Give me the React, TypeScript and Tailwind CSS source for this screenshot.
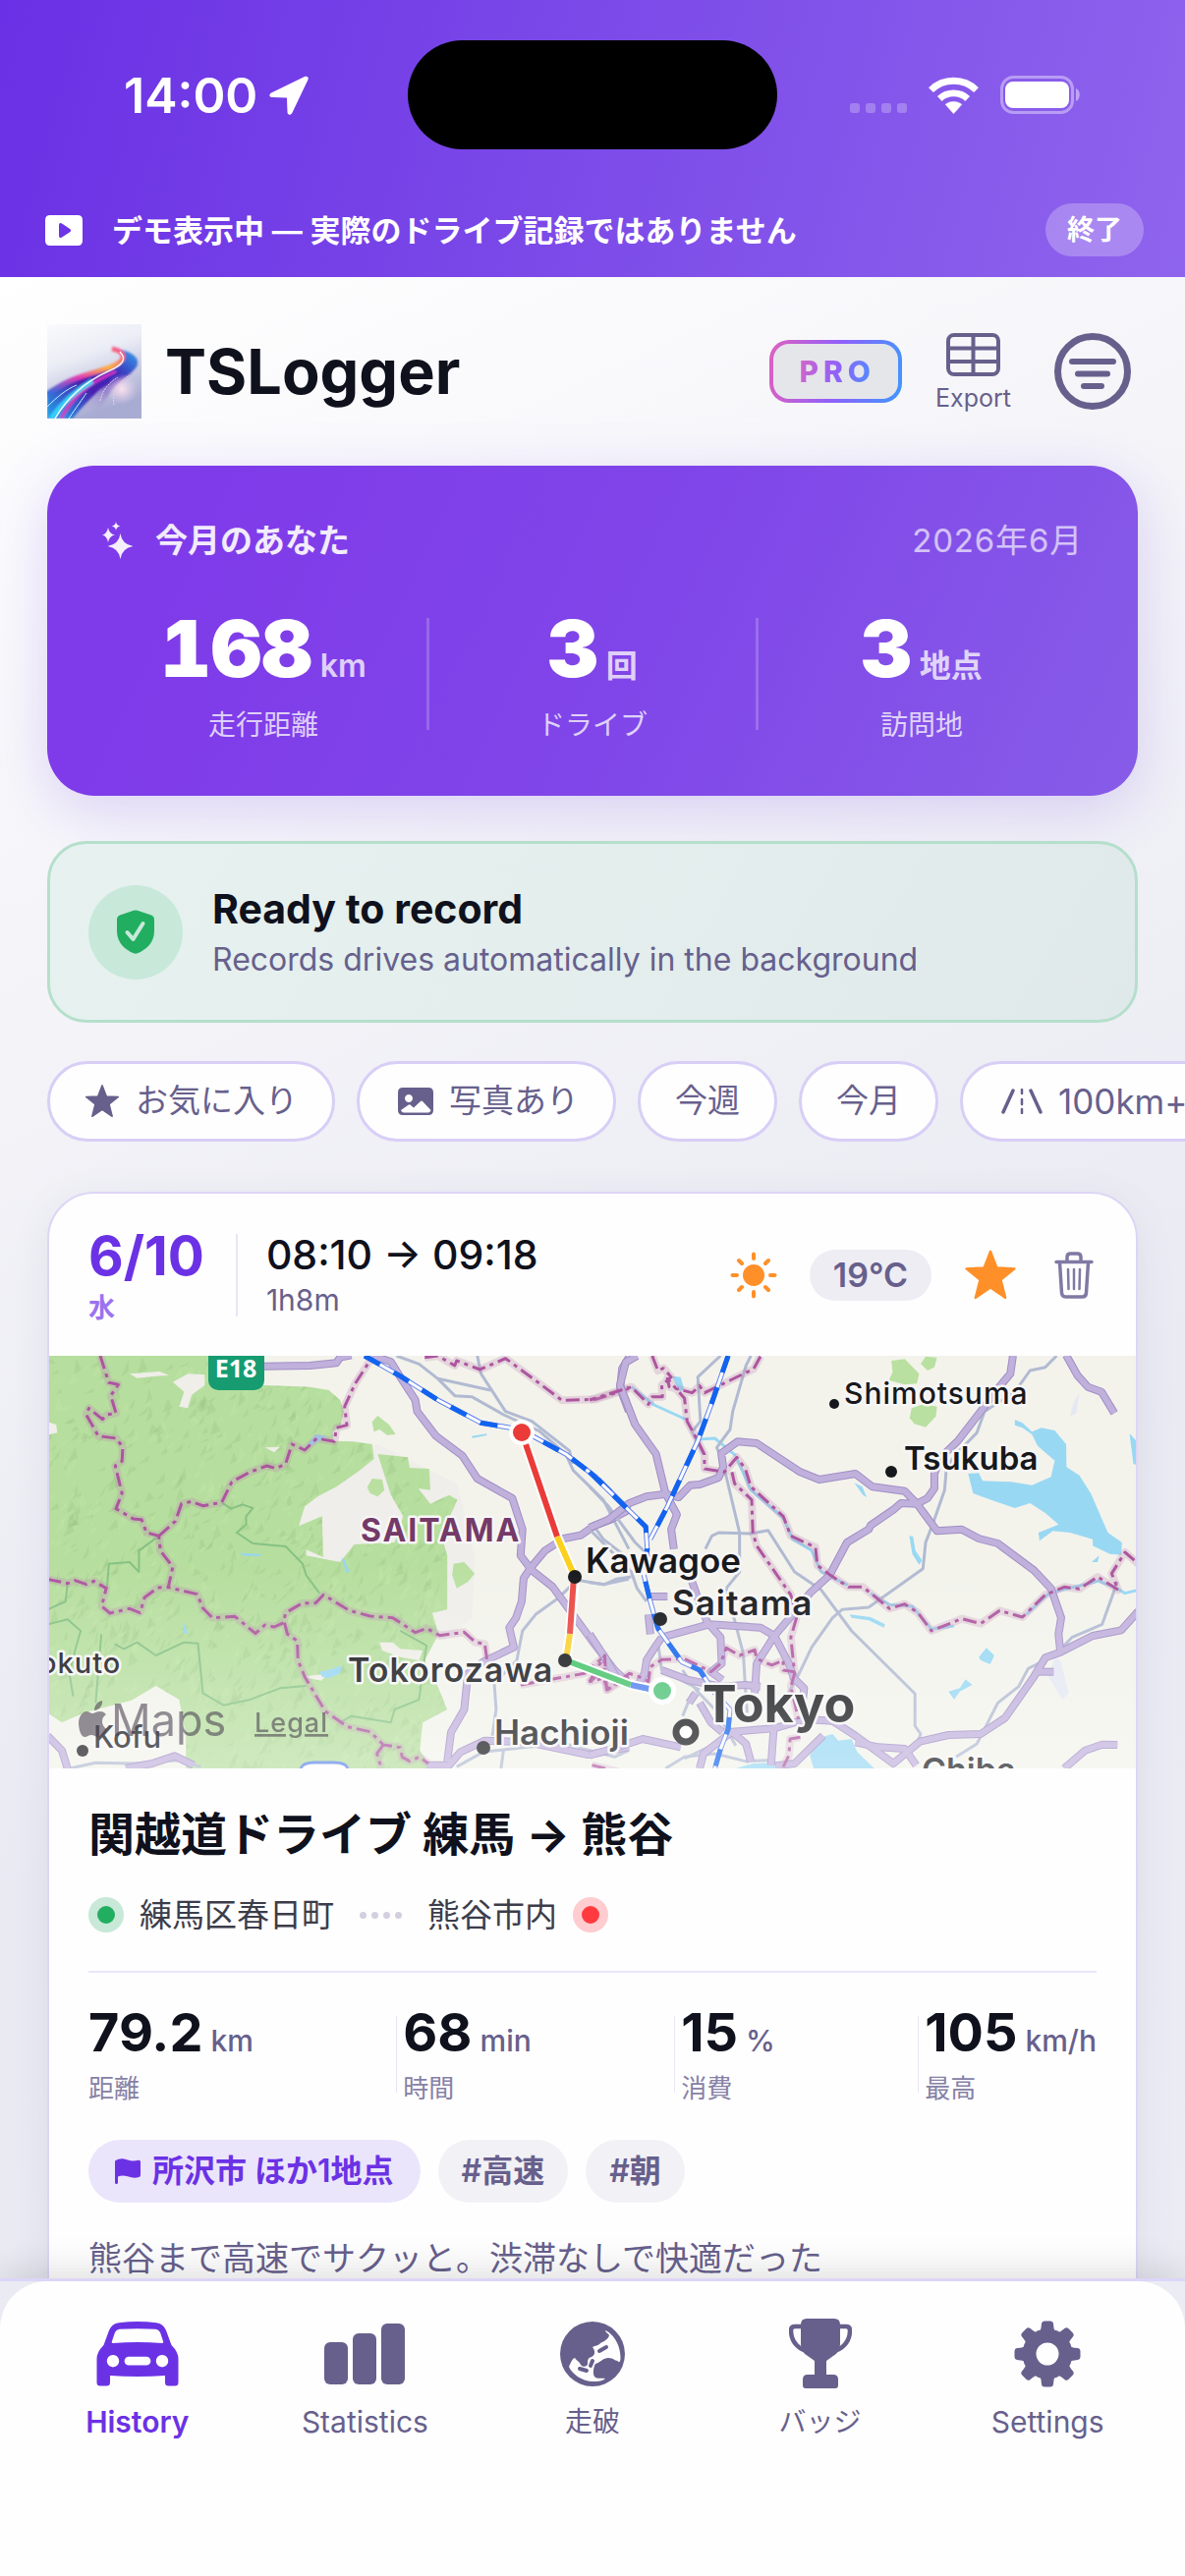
import React from "react";

const purpleRoadsWest = [
  "M598,62 L720,60 L790,52 L800,35 L830,28",
  "M885,30 L935,48 L960,95 L1000,165 L1005,200 L1055,275 L1125,335 L1165,405 L1258,465 L1285,560 L1280,640 L1310,685 L1365,735 L1400,790 L1470,900 L1530,990 L1568,1030",
  "M1568,500 L1520,530 L1475,550 L1440,578 L1395,588 L1345,625 L1305,680 L1288,710 L1283,780 L1268,830 L1250,860 L1262,920 L1180,965 L1140,1000 L1130,1110 L1095,1180 L1085,1270",
  "M1568,35 L1550,70 L1545,130 L1568,200",
  "M1030,1280 L1090,1280 L1120,1240 L1185,1205 L1300,1210 L1460,1248 L1568,1225",
  "M22,1190 L60,1235 L75,1290",
  "M230,1290 L300,1275 L360,1252 L410,1280",
];

const purpleRoadsEast = [
  "M125,30 L95,50 L80,120 L120,240 L175,330 L200,450 L230,515 L215,560 L222,620",
  "M0,555 L50,530 L105,480 L150,460 L200,452 L235,462 L265,425 L290,423 L340,402 L352,370 L347,328 L390,292 L440,297 L555,385 L605,408 L700,390 L745,430 L830,443 L862,482 L880,510 L915,565 L980,560 L1025,588 L1075,603 L1170,685 L1215,740 L1242,830 L1235,880 L1240,935",
  "M1115,30 L1108,85 L1075,130 L1030,200 L970,290 L925,340 L908,390 L908,435 L890,465 L862,482 L820,480 L800,500 L740,548 L735,560 L678,600 L632,700 L580,755 L520,840 L487,885 L440,970 L435,1060",
  "M1255,28 L1285,90 L1312,125 L1348,140 L1382,205",
  "M190,890 L315,850 L450,860 L487,885 L525,970 L538,1015 L565,1045 L560,1100",
  "M315,850 L345,890 L348,970 L320,995 L350,1020",
  "M190,990 L260,1020 L345,1040 L410,1035 L450,1040",
  "M190,890 L175,915 L150,960 L145,1000 L130,1030",
  "M1445,810 L1400,868 L1325,885 L1240,935 L1200,952 L1170,1010 L1095,1135 L1030,1185 L945,1188 L870,1208 L800,1275 L700,1190 L640,1145 L570,1140 L485,1168 L375,1178 L300,1245 L290,1290",
  "M1390,1218 L1350,1217 L1305,1235 L1250,1290",
  "M375,1178 L412,1215 L425,1270",
  "M485,1168 L478,1280",
  "M615,1190 L540,1275 L490,1282",
  "M700,1210 L760,1225 L830,1230 L860,1280",
  "M0,1250 L60,1230 L140,1200 L240,1225",
  "M290,1090 L320,1150 L350,1180",
  "M0,880 L40,950 L70,1010",
  "M150,765 L205,765",
  "M155,820 L160,880",
  "M270,720 L285,770 L312,850",
  "M280,1060 L262,1090",
  "M1180,995 L1222,995",
];

const grayRoadsWest = [
  "M950,30 L1010,55 L1060,100 L1105,152 L1150,155 L1235,210 L1330,260 L1400,330 L1420,380 L1500,470 L1568,620",
  "M1060,100 L1200,135",
  "M1165,30 L1175,85 L1240,200 L1310,230 L1410,320 L1418,360",
  "M1568,712 L1500,728 L1430,715 L1380,770 L1320,820 L1285,870 L1270,960 L1210,1030 L1215,1110 L1205,1190",
  "M1475,550 L1500,590 L1568,650",
  "M80,1290 L150,1273 L250,1275 L370,1265 L430,1285",
  "M1110,1285 L1180,1240 L1300,1225 L1400,1215 L1530,1255 L1568,1235",
  "M1235,1230 L1228,1290",
];

const grayRoadsEast = [
  "M345,30 L285,95 L292,230 L270,262 L300,330",
  "M425,30 L412,60 L377,200 L370,255 L335,310 L350,350 L395,570 L395,690 L360,740",
  "M1230,30 L1200,65 L1160,75 L1120,140 L1040,200 L1020,265 L965,330 L940,370 L935,440 L905,540 L885,600 L878,680 L735,798 L665,805 L640,830 L585,920 L550,1005 L490,1130",
  "M305,620 L322,580 L340,570 L425,573 L470,563 L540,690 L610,745 L690,870 L857,1062 L857,1160 L872,1185 L860,1220",
  "M0,430 L50,490 L120,600 L165,650",
  "M0,560 L60,630 L110,690 L125,740 L150,780",
  "M360,740 L405,940 L410,1040 L415,1120",
  "M1390,720 L1350,850 L1270,890 L1225,945 L1155,985 L1130,1040 L1075,1090 L1020,1215 L965,1255",
  "M245,990 L280,1050 L330,1110 L385,1220",
  "M250,1260 L330,1215 L375,1170",
  "M180,905 L190,990 L290,1050",
  "M270,1060 L245,1130",
  "M200,1290 L250,1255 L330,1245 L410,1268 L470,1265",
  "M0,722 L40,728 L70,712 L110,705",
];

const bordersWest = [
  "M162,30 L185,112 L210,118 L190,152 L204,205 L180,210 L168,224 L132,190 L125,210 L157,275 L205,282 L222,310 L220,352 L202,366 L220,450 L204,497 L250,528 L272,530 L285,570 L318,580 L322,625 L355,675 L343,737 L420,758 L435,800 L460,830 L520,826 L575,878 L600,852 L625,858 L650,845 L655,815 L700,785 L735,785 L756,760 L825,808 L880,825 L940,830 L1000,875 L1030,862 L1065,884 L1130,874 L1160,905 L1185,910 L1192,970",
  "M318,580 L362,535 L378,482 L405,475 L435,488 L485,478 L512,415 L560,385 L605,366 L630,374 L655,360 L672,300 L706,318 L738,282 L785,292 L790,250 L818,242 L812,185 L840,115 L885,35",
  "M22,712 L75,725 L95,716 L125,728 L145,718 L178,740 L166,795 L188,816 L240,802 L268,815 L280,768 L315,738 L343,737",
  "M652,845 L660,880 L686,900 L688,960 L706,1010 L760,1115 L820,1163 L880,1178 L915,1218 L960,1226 L965,1255 L985,1268 L1010,1255 L1035,1275",
  "M915,1218 L898,1245 L910,1290",
  "M1025,35 L1060,30 L1105,60 L1110,45 L1172,72 L1240,38 L1290,80 L1390,166 L1480,163 L1568,130",
  "M1280,1035 L1450,1000 L1500,950 L1505,985 L1465,1025 L1500,1015 L1512,1050 L1568,1010",
  "M1470,1280 L1540,1300",
];

const bordersEast = [
  "M165,30 L180,75 L195,68 L215,95 L190,120 L192,155 L165,155 L155,178 L110,125 L0,165",
  "M450,32 L432,70 L370,105 L303,143 L290,122 L270,143 L210,125 L205,100 L250,160 L257,230 L285,290 L302,330 L303,375 L355,385 L388,340 L410,375 L425,430 L510,520 L530,580 L595,615 L600,670 L632,698 L682,736 L720,736 L790,802 L830,788 L865,815 L900,870 L980,833 L1030,848 L1080,808 L1140,828 L1200,760 L1250,736 L1290,742 L1338,705 L1392,745 L1375,695 L1410,630 L1445,665",
  "M375,385 L382,420 L427,470 L430,570 L440,610 L530,760 L545,830 L530,890 L540,1000 L530,1040 L550,1140",
  "M0,1025 L40,945 L45,1050 L105,1000 L130,1010 L155,1025 L160,980 L190,958 L250,955 L320,995 L345,970 L360,922 L395,945 L435,928 L440,955 L480,975 L510,960 L510,990 L540,995",
  "M555,1195 L528,1200 L525,1250 L510,1285",
];

const railWest = "M865,30 L960,92 L1060,165 L1175,235 L1280,255 L1400,330 L1480,400 L1568,500";
const railsEast = [
  "M0,385 L148,552 L152,620 L143,700 L160,780 L180,862 L243,965 L290,990 L330,1060 L370,1110 L365,1170 L345,1230 L330,1290",
  "M365,30 L320,180 L285,290 L205,490 L160,590",
];

const forest =
  "M22,30 H450 L455,122 L600,120 L720,125 L770,135 L800,165 L810,200 L800,245 L780,262 L782,290 L835,292 L885,300 L890,345 L850,382 L790,430 L740,460 L706,490 L690,550 L752,520 L755,645 L710,622 L710,640 L800,660 L838,606 L945,600 L968,520 L935,455 L900,330 L980,340 L985,372 L1037,375 L1040,440 L1008,435 L1040,482 L1090,455 L1112,470 L1092,520 L1075,600 L1085,640 L1085,805 L1045,815 L1062,880 L1025,960 L1060,1040 L1085,1110 L1020,1150 L1012,1235 L1045,1290 L390,1290 L390,1190 L372,1080 L310,1038 L245,1082 L120,1120 L60,1150 L22,1120 Z";

const westPatches = [
  "M885,232 L900,213 L930,240 L948,270 L925,272 L905,255 L890,262 Z",
  "M872,432 L885,405 L912,408 L918,440 L900,460 L880,450 Z",
  "M1102,665 L1130,660 L1158,695 L1140,720 L1110,740 L1098,700 Z",
];
const eastPatches = [
  "M795,45 L830,40 L868,85 L862,115 L830,118 L788,105 L798,80 Z",
  "M885,32 L915,35 L908,65 L890,75 L872,55 Z",
  "M848,190 L880,178 L915,185 L912,215 L885,248 L855,238 L843,220 Z",
];
const clearings = [
  "M355,110 L395,85 L440,88 L440,120 L405,150 L395,190 L372,185 L385,140 Z",
  "M240,85 L320,78 L345,90 L310,92 L260,98 Z",
  "M22,232 L45,240 L48,265 L22,272 Z",
  "M600,310 L640,308 L625,325 Z",
  "M905,905 L940,905 L960,925 L1020,930 L1010,960 L960,950 L912,930 Z",
  "M700,1010 L770,1000 L750,1022 Z",
];
const waterWest = [
  "M745,995 L775,988 L805,975 L800,1000 L770,1015 L752,1010 Z",
  "M535,632 L590,636 L588,642 L540,640 Z",
  "M803,645 L812,655 L826,693 L816,690 Z",
  "M380,842 L388,855 L396,880 L386,878 Z",
  "M706,312 L735,270 L765,275 L730,300 Z",
  "M1150,275 L1190,268 L1190,273 L1152,281 Z",
];
const waterEast = [
  "M1120,225 L1140,235 L1165,262 L1190,250 L1225,258 L1255,300 L1256,370 L1290,395 L1320,450 L1350,530 L1365,570 L1402,600 L1400,638 L1370,635 L1325,610 L1325,590 L1265,570 L1220,565 L1185,595 L1182,570 L1235,545 L1200,510 L1160,480 L1120,495 L1045,465 L1010,450 L997,390 L1025,388 L1035,412 L1110,415 L1165,425 L1215,400 L1225,350 L1180,305 L1165,270 L1140,250 L1120,242 Z",
  "M1422,268 L1440,290 L1443,365 L1432,360 Z",
  "M1025,950 L1045,922 L1066,945 L1055,972 L1030,960 Z",
  "M945,1055 L975,1045 L990,1018 L1008,1035 L975,1055 L960,1080 Z",
  "M685,820 L740,828 L778,850 L775,860 L735,838 L690,830 Z",
  "M842,580 L852,582 L858,625 L876,655 L868,668 L850,635 Z",
  "M580,1250 L610,1195 L640,1185 L655,1205 L690,1200 L705,1240 L750,1290 L590,1290 Z",
  "M218,92 L240,95 L250,135 L235,138 Z",
  "M697,418 L718,430 L730,462 L720,455 Z",
  "M385,1290 L430,1275 L500,1272 L510,1290 Z",
  "M1322,660 L1342,640 L1338,660 Z",
];
const streams = [
  "M388,345 L425,440 L510,525 L535,590 L585,625 L610,690 L680,730",
  "M740,755 L790,790 L850,795 L900,865 L960,855",
  "M110,125 L170,180 L255,225",
  "M285,285 L330,282 L385,335",
  "M1150,820 L1210,755 L1340,718 L1380,735 L1410,755 L1445,745",
];
const parkEdges = [
  "M485,478 L510,497 L540,484 L568,495 L550,520 L550,545 L525,570 L568,603 L655,612 L700,665 L710,700 L745,755",
  "M318,580 L265,625 L265,690 L240,660 L185,665 L180,740",
  "M22,850 L75,835 L110,870 L95,930 L80,1000 L90,1070",
  "M200,910 L225,925 L260,905 L310,945 L385,905 L422,908 L435,1060 L490,1097 L560,1080 L640,1045 L710,1038",
  "M960,870 L1030,915 L1025,950 L1010,1080 L945,1110 L935,1150 L830,1130 L800,1150",
  "M22,805 L70,780 L75,725",
  "M165,880 L150,1090",
];

// Small facets that give the forest its shaded relief.
const facets = Array.from({ length: 1500 }, (_, i) => {
  const rand = (n: number) => {
    const v = Math.sin(i * 12.9898 + n * 78.233) * 43758.5453;
    return v - Math.floor(v);
  };
  const x = Math.round(rand(1) * 1130);
  const y = Math.round(30 + rand(2) * 1260);
  const a = Math.round(rand(3) * 24 - 30);
  const b = Math.round(16 + rand(4) * 36);
  const c = Math.round(8 + rand(5) * 20);
  return { d: `M${x},${y} l${a},${b} l${c},${-Math.round(b / 3)} Z`, dark: rand(6) > 0.45 };
});

type Label = { t: string; x: number; y: number; s: number; w?: number; c?: string; ls?: number; dot?: [number, number, number] };
const labels: Label[] = [
  { t: "Shimotsuma", x: 809, y: 49, s: 30, w: 500, ls: 1, dot: [799, 49, 5] },
  { t: "Tsukuba", x: 870, y: 116, s: 33, dot: [857, 118, 6] },
  { t: "SAITAMA", x: 317, y: 189, s: 32, w: 700, c: "#743a68", ls: 2 },
  { t: "Kawagoe", x: 546, y: 221, s: 35, dot: [535, 225, 7] },
  { t: "Saitama", x: 634, y: 264, s: 35, ls: 1, dot: [622, 268, 7] },
  { t: "Tokorozawa", x: 304, y: 332, s: 34, ls: 1, dot: [525, 310, 7] },
  { t: "Hachioji", x: 453, y: 396, s: 35, dot: [442, 399, 7] },
  { t: "Kofu", x: 45, y: 399, s: 31, w: 500, dot: [34, 402, 6] },
  { t: "okuto", x: -10, y: 323, s: 29, w: 500, ls: 1 },
  { t: "Chiba", x: 888, y: 434, s: 34 },
  { t: "Tokyo", x: 665, y: 373, s: 52, w: 700 },
];

function Lines({ d, stroke, w, dash, o }: { d: string[]; stroke: string; w: number; dash?: string; o?: number }) {
  return (
    <g fill="none" stroke={stroke} strokeWidth={w} strokeDasharray={dash} opacity={o} strokeLinejoin="round">
      {d.map((p) => (
        <path key={p} d={p} vectorEffect="non-scaling-stroke" />
      ))}
    </g>
  );
}

function Roads({ purple, gray, borders, rails }: { purple: string[]; gray: string[]; borders: string[]; rails: string[] }) {
  return (
    <>
      <Lines d={gray} stroke="#b1bad1" w={3} />
      <Lines d={borders} stroke="#c08ab5" w={8} o={0.28} />
      <Lines d={purple} stroke="#a18ec4" w={8} />
      <Lines d={purple} stroke="#c0b0dc" w={6} />
      <Lines d={borders} stroke="#ad559f" w={3} dash="14 5 4 5" />
      <Lines d={rails} stroke="#5f80ef" w={5} />
      <Lines d={rails} stroke="#ffffff" w={3} />
      <Lines d={rails} stroke="#1263ef" w={5} dash="18 16" />
    </>
  );
}

function RouteMap() {
  return (
    <svg viewBox="0 0 1106 420" preserveAspectRatio="xMidYMid slice" className="block h-[420px] w-full" role="img" aria-label="Route map from Nerima to Kumagaya">
      <defs>
        <clipPath id="forest-clip">
          <path d={forest} />
        </clipPath>
        <linearGradient id="map-fade" x1="0" y1="0" x2="0" y2="1">
          <stop offset="0.5" stopColor="#fff" stopOpacity="0" />
          <stop offset="1" stopColor="#fff" stopOpacity="0.34" />
        </linearGradient>
      </defs>
      <rect width="1106" height="420" fill="#f3f3ec" />
      <g transform="translate(-10 -10) scale(0.38265 0.33333)">
        <path d="M680,380 L900,300 L1110,420 L1160,650 L1150,830 L1080,900 L700,700 Z" fill="#efeeea" />
        <path d={forest} fill="#b6de9e" />
        <g clipPath="url(#forest-clip)">
          {facets.map((f, i) => (
            <path key={i} d={f.d} fill={f.dark ? "#98c386" : "#c2e8a9"} opacity="0.3" />
          ))}
        </g>
        {clearings.map((d) => (
          <path key={d} d={d} fill="#efeee8" />
        ))}
        {westPatches.map((d) => (
          <path key={d} d={d} fill="#b9e0a1" />
        ))}
        {waterWest.map((d) => (
          <path key={d} d={d} fill="#97d6f2" />
        ))}
        <Lines d={parkEdges} stroke="#86c184" w={2} />
        <Roads purple={purpleRoadsWest} gray={grayRoadsWest} borders={bordersWest} rails={[railWest]} />
      </g>
      <g transform="translate(550 -10) scale(0.38647 0.33333)">
        {eastPatches.map((d) => (
          <path key={d} d={d} fill="#b9e0a1" />
        ))}
        {waterEast.map((d) => (
          <path key={d} d={d} fill="#99d8f3" />
        ))}
        <Lines d={streams} stroke="#99d8f3" w={3} />
        <path d="M1290,145 L1282,205 L1265,215 L1275,170 Z M1225,950 L1240,960 L1262,1060 L1245,1080 L1208,1010 Z" fill="#e4e8f3" />
        <Roads purple={purpleRoadsEast} gray={grayRoadsEast} borders={bordersEast} rails={railsEast} />
      </g>
      <rect x="162" y="-20" width="57" height="55" rx="10" fill="#169c70" />
      <text x="190" y="22" textAnchor="middle" fill="#fff" fontSize="25" fontWeight="700" fontFamily="Open Sans, Inter, sans-serif">
        E18
      </text>
      <path d="M256,420 Q258,414 270,414 H290 Q302,414 304,420" fill="#fff" stroke="#5d86e8" strokeWidth="3" />
      <g fill="none">
        <path d="M481,78 L517,184 L535,225 L530,283 L526,310 L592,335 L620,341" stroke="#fff" strokeWidth="10" />
        <path d="M481,78 L517,184" stroke="#ea3b38" strokeWidth="6" />
        <path d="M517,184 L535,225" stroke="#fbd01e" strokeWidth="6" />
        <path d="M534,225 L530,283" stroke="#ea4843" strokeWidth="6" />
        <path d="M530,283 L526,310" stroke="#fbd02e" strokeWidth="6" />
        <path d="M526,310 L592,335" stroke="#42c266" strokeWidth="6" />
        <path d="M592,335 L620,341" stroke="#4f7ff0" strokeWidth="6" />
      </g>
      <g fontFamily="Inter, sans-serif">
        {labels.map((l) => (
          <g key={l.t}>
            {l.dot && <circle cx={l.dot[0]} cy={l.dot[1]} r={l.dot[2]} fill="#17181b" />}
            <text x={l.x} y={l.y} fontSize={l.s} fontWeight={l.w ?? 600} letterSpacing={l.ls ?? 0} fill={l.c ?? "#17181b"} stroke="#f7f6f6" strokeWidth="5" strokeLinejoin="round" paintOrder="stroke">
              {l.t}
            </text>
          </g>
        ))}
        <circle cx="648" cy="383" r="10" fill="#fff" stroke="#17181b" strokeWidth="7" />
      </g>
      <circle cx="481" cy="78" r="13" fill="#fff" />
      <circle cx="481" cy="78" r="9" fill="#ea3b38" />
      <circle cx="624" cy="341" r="14" fill="#fff" />
      <circle cx="624" cy="341" r="9" fill="#4fc277" />
      <rect width="1106" height="420" fill="url(#map-fade)" />
      <g fill="#4a4150" opacity="0.58" fontFamily="Inter, sans-serif">
        <path d="M54,351 c1,5 -4,10 -8,10 c0,-5 3,-9 8,-10 Z M58,365 c-6,4 -5,12 1,15 c-2,5 -5,8 -9,8 c-3,0 -4,-2 -7,-2 c-3,0 -4,2 -7,2 c-4,0 -6,-9 -6,-14 c0,-7 4,-12 8,-12 c3,0 4,2 6,2 c2,0 4,-2 8,-2 c3,0 4,1 6,3 Z" />
        <text x="63" y="387" fontSize="45" fontWeight="400">
          Maps
        </text>
        <text x="209" y="383" fontSize="27" fontWeight="500" letterSpacing="1" textDecoration="underline">
          Legal
        </text>
      </g>
    </svg>
  );
}

const starPath = "M12 1.2 L14.9 8.6 L22.9 9 L16.7 14 L18.8 22.2 L12 17.6 L5.2 22.2 L7.3 14 L1.1 9 L9.1 8.6 Z";

function Star({ className }: { className: string }) {
  return (
    <svg viewBox="0 0 24 24" className={className} fill="currentColor" stroke="currentColor" strokeWidth="1" strokeLinejoin="round" aria-hidden="true">
      <path d={starPath} />
    </svg>
  );
}

function Logo() {
  return (
    <svg viewBox="0 0 96 96" className="size-24" role="img" aria-label="TSLogger logo">
      <defs>
        <linearGradient id="lg-sky" x1="0" y1="0" x2="0.35" y2="1">
          <stop offset="0" stopColor="#fafafc" />
          <stop offset="0.4" stopColor="#eceef6" />
          <stop offset="1" stopColor="#a9acd2" />
        </linearGradient>
        <linearGradient id="lg-blue" x1="1" y1="0" x2="0" y2="1">
          <stop offset="0" stopColor="#38a8f0" />
          <stop offset="0.3" stopColor="#3a2bb8" />
          <stop offset="0.55" stopColor="#4a1fb0" />
          <stop offset="1" stopColor="#1ea6ee" />
        </linearGradient>
        <linearGradient id="lg-hot" x1="1" y1="0" x2="0" y2="1">
          <stop offset="0" stopColor="#f54f9a" />
          <stop offset="0.3" stopColor="#ffb13c" />
          <stop offset="0.6" stopColor="#e43cb4" />
          <stop offset="1" stopColor="#2a6fe0" />
        </linearGradient>
        <linearGradient id="lg-fade" x1="1" y1="0" x2="0.6" y2="1">
          <stop offset="0.5" stopColor="#4a1fb0" />
          <stop offset="1" stopColor="#b9b2dc" stopOpacity="0" />
        </linearGradient>
        <radialGradient id="lg-glow">
          <stop offset="0" stopColor="#ffe4ee" stopOpacity="0.95" />
          <stop offset="1" stopColor="#e9cfee" stopOpacity="0" />
        </radialGradient>
        <filter id="lg-soft">
          <feGaussianBlur stdDeviation="1" />
        </filter>
      </defs>
      <rect width="96" height="96" fill="url(#lg-sky)" />
      <g filter="url(#lg-soft)">
        <path d="M70,25 C84,27 96,34 91,43 C84,54 72,58 64,70 C58,78 54,86 50,96 L0,96 L0,72 C20,56 50,50 66,43 C80,37 80,30 70,25 Z" fill="url(#lg-fade)" opacity="0.7" />
        <path d="M70,25 C84,27 96,34 91,43 C84,54 62,58 50,70 C42,78 34,86 26,96 L0,96 L0,68 C20,54 50,49 66,43 C80,37 80,30 70,25 Z" fill="url(#lg-blue)" />
        <path d="M0,72 C24,52 50,50 66,43 C82,36 80,28 66,25" fill="none" stroke="url(#lg-hot)" strokeWidth="5" />
        <path d="M14,96 C30,66 52,56 70,48" fill="none" stroke="#d736c4" strokeWidth="3" />
        <path d="M4,96 C18,76 32,66 46,58" fill="none" stroke="#36d0f6" strokeWidth="5" />
      </g>
      <circle cx="76" cy="66" r="16" fill="url(#lg-glow)" />
      <path d="M8,96 C22,72 40,58 62,48 C76,42 82,36 74,28" fill="none" stroke="#fff" strokeWidth="1.4" opacity="0.9" />
      <path d="M0,84 C10,74 20,66 30,62 M22,96 C30,84 36,76 40,70" fill="none" stroke="#bff3ff" strokeWidth="1" />
      <path d="M68,82 C66,70 70,60 84,52 M54,78 C56,68 62,60 72,54" fill="none" stroke="#f8c6e6" strokeWidth="1" strokeDasharray="2 1" />
    </svg>
  );
}

function StatusBar() {
  return (
    <div className="grid h-[111px] grid-cols-[1fr_376px_1fr] items-center">
      <div className="flex items-center gap-3 pl-[126px]">
        <span className="text-[50px] leading-none font-semibold">14:00</span>
        <svg viewBox="0 0 40 40" className="size-10" fill="currentColor" aria-hidden="true">
          <path d="M36 1 L2 17.500 C-0.500 19 0 22 3 22 L17 22.500 C18 22.500 18 22.800 18 24 L18.500 37 C18.500 40.500 22 40.500 23.300 38 L39.500 4 C40.500 1.500 38.500 0 36 1 Z" />
        </svg>
      </div>
      <div className="h-full rounded-full bg-black" />
      <div className="flex items-center justify-end gap-[22px] pr-[106px]">
        <div className="flex gap-[6px] pt-[26px] opacity-25">
          <i className="size-[10px] rounded-[3px] bg-white" />
          <i className="size-[10px] rounded-[3px] bg-white" />
          <i className="size-[10px] rounded-[3px] bg-white" />
          <i className="size-[10px] rounded-[3px] bg-white" />
        </div>
        <svg viewBox="0 0 52 38" className="h-[38px] w-[51px]" aria-hidden="true">
          <path d="M26 38 L17.500 28.500 C22 24.500 30 24.500 34.500 28.500 Z" fill="#fff" stroke="#fff" strokeWidth="0.500" />
          <g fill="none" stroke="#fff" strokeWidth="7">
            <path d="M11.500 22.500 C19.500 15 32.500 15 40.500 22.500" />
            <path d="M2.500 13.500 C15.500 0.800 36.500 0.800 49.500 13.500" />
          </g>
        </svg>
        <svg viewBox="0 0 82 39" className="h-[39px] w-[82px]" aria-hidden="true">
          <rect x="1.500" y="1.500" width="72" height="36" rx="12" fill="none" stroke="#fff" strokeWidth="3" opacity="0.4" />
          <rect x="5" y="6" width="65" height="27" rx="8" fill="#fff" />
          <path d="M77 13 C82 15 82 24 77 26 Z" fill="#fff" opacity="0.45" />
        </svg>
      </div>
    </div>
  );
}

function Summary({ value, unit, label }: { value: string; unit: string; label: string }) {
  return (
    <div className="flex flex-1 flex-col items-center gap-6">
      <p className="flex items-baseline gap-2 leading-none">
        <span className="text-[80px] leading-none font-black tabular-nums">{value}</span>
        <span className="text-[32px] leading-none font-semibold text-white/75">{unit}</span>
      </p>
      <p className="text-[28px] leading-none text-white/75">{label}</p>
    </div>
  );
}

function Metric({ value, unit, label, divided }: { value: string; unit: string; label: string; divided?: boolean }) {
  return (
    <div className="flex items-center gap-[6px]">
      {divided && <i className="h-[78px] w-px bg-[#e9e5f6]" />}
      <div>
        <p className="flex items-baseline gap-2 leading-none">
          <span className="text-[54px] leading-none font-bold text-[#0f111c]">{value}</span>
          <span className="text-[30px] leading-none font-medium text-[#67608c]">{unit}</span>
        </p>
        <p className="mt-[17px] text-[26px] leading-none text-[#8681a5]">{label}</p>
      </div>
    </div>
  );
}

function Chip({ children }: { children: React.ReactNode }) {
  return (
    <button type="button" className="flex h-[82px] shrink-0 items-center gap-4 rounded-full border-[3px] border-[#d8cef6] bg-[#fefeff] px-[35px] text-[33px] whitespace-nowrap text-[#67608c]">
      {children}
    </button>
  );
}

function Tab({ label, active, cjk, children }: { label: string; active?: boolean; cjk?: boolean; children: React.ReactNode }) {
  return (
    <a href="#" aria-current={active ? "page" : undefined} className={active ? "flex flex-1 flex-col items-center gap-4 font-semibold text-[#6b32e5]" : "flex flex-1 flex-col items-center gap-4 text-[#67608c]"}>
      <span className="flex h-[71px] items-center">{children}</span>
      <span className={cjk ? "text-[28px] leading-[36px]" : "text-[30px] leading-[36px]"}>{label}</span>
    </a>
  );
}

export default function App() {
  return (
    <div className="flex h-screen flex-col overflow-hidden bg-[linear-gradient(155deg,#ffffff_8%,#f3f3f8_34%,#e9eaf2_62%,#ecedf4_100%)] font-['Inter','Noto_Sans_CJK_JP',sans-serif] text-[#0f111c]" lang="ja">
      <div className="shrink-0 bg-[linear-gradient(105deg,#6a30e5,#7a48e8_45%,#8f64ed)] pt-[41px] pb-[21px] text-white">
        <StatusBar />
        <div className="mt-[55px] flex items-center pr-[42px] pl-[46px]">
          <svg viewBox="0 0 38 31" className="h-[31px] w-[38px]" aria-hidden="true">
            <path fillRule="evenodd" fill="#fff" d="M5 0 H33 Q38 0 38 5 V26 Q38 31 33 31 H5 Q0 31 0 26 V5 Q0 0 5 0 Z M14 10 V21 Q14 24 17 22.500 L25.500 17 Q27 15.500 25.500 14.200 L17 8.500 Q14 7 14 10 Z" />
          </svg>
          <p className="ml-[30px] flex-1 text-[31px] leading-none font-semibold">デモ表示中 — 実際のドライブ記録ではありません</p>
          <button type="button" className="h-[54px] rounded-full bg-white/25 px-[22px] text-[28px] leading-none font-semibold">
            終了
          </button>
        </div>
      </div>

      <main className="min-h-0 flex-1 overflow-hidden px-12 pt-12">
        <header className="flex items-center pr-[7px]">
          <Logo />
          <h1 className="ml-6 flex-1 text-[63px] leading-none font-bold">TSLogger</h1>
          <button type="button" className="rounded-[20px] bg-[linear-gradient(100deg,#e060c0,#8f60fa_50%,#3f98ff)] p-1">
            <span className="flex h-14 items-center rounded-2xl bg-[#e5e6ea] pr-[23px] pl-[26px]">
              <span className="bg-[linear-gradient(100deg,#d567c8,#9060fa_50%,#4a92ff)] bg-clip-text text-[30px] leading-none font-extrabold tracking-[5px] text-transparent">PRO</span>
            </span>
          </button>
          <button type="button" className="ml-[34px] flex flex-col items-center gap-[10px] text-[25px] leading-none text-[#67608c]">
            <svg viewBox="0 0 55 44" className="h-[44px] w-[55px]" fill="none" stroke="currentColor" strokeWidth="4" aria-hidden="true">
              <rect x="2" y="2" width="51" height="40" rx="6" />
              <path d="M2 15.500 H53 M2 29 H53 M27.500 2 V42" />
            </svg>
            Export
          </button>
          <button type="button" aria-label="Filter" className="ml-[44px] text-[#67608c]">
            <svg viewBox="0 0 78 78" className="size-[78px]" fill="none" stroke="currentColor" aria-hidden="true">
              <circle cx="39" cy="39" r="35.500" strokeWidth="7" />
              <path d="M18 29 H60 M24 41.500 H54 M30 54 H48" strokeWidth="6" strokeLinecap="round" />
            </svg>
          </button>
        </header>

        <section className="mt-12 rounded-[48px] bg-[linear-gradient(115deg,#7f3be9_15%,#8046e9_55%,#875ce8)] px-[54px] pt-[57px] pb-[58px] text-white shadow-[0_14px_60px_rgba(110,60,230,0.2)]">
          <div className="flex h-[38px] items-center px-[2px]">
            <svg viewBox="0 0 32 38" className="h-[38px] w-8" fill="#fff" opacity="0.92" aria-hidden="true">
              <path d="M18.500 12 Q20 23 31.500 25 Q20 27 18.500 38 Q17 27 5.500 25 Q17 23 18.500 12 Z" />
              <path d="M6 6 Q7.200 12.500 13 13.500 Q7.200 14.500 6 21 Q4.800 14.500 0 13.500 Q4.800 12.500 6 6 Z" />
              <path d="M14 0 Q14.500 3.800 18.500 4.500 Q14.500 5.200 14 9 Q13.500 5.200 9.500 4.500 Q13.500 3.800 14 0 Z" />
            </svg>
            <h2 className="ml-[22px] flex-1 text-[33px] leading-none font-semibold text-white/90">今月のあなた</h2>
            <p className="text-[33px] leading-none tracking-wide text-white/65">2026年6月</p>
          </div>
          <div className="mt-[51px] flex items-center">
            <Summary value="168" unit="km" label="走行距離" />
            <i className="h-[114px] w-[3px] bg-white/20" />
            <Summary value="3" unit="回" label="ドライブ" />
            <i className="h-[114px] w-[3px] bg-white/20" />
            <Summary value="3" unit="地点" label="訪問地" />
          </div>
        </section>

        <section className="mt-[46px] flex h-[185px] items-center gap-[30px] rounded-[40px] border-[3px] border-[#b5dfcb] bg-[linear-gradient(120deg,#e7f2f0,#e3eeed_50%,#e0e9ea)] px-[39px]">
          <span className="flex size-24 items-center justify-center rounded-full bg-[#c8e8da]">
            <svg viewBox="0 0 38 45" className="h-[45px] w-[38px]" aria-hidden="true">
              <path d="M17 0.800 Q19 0 21 0.800 L35 5.500 Q38 6.800 38 10 V22 C38 34 29 41 21 44.300 Q19 45.200 17 44.300 C9 41 0 34 0 22 V10 Q0 6.800 3 5.500 Z" fill="#22ae60" />
              <path d="M10.500 23 L16.500 30 L26.500 14" fill="none" stroke="#c8e8da" strokeWidth="4" strokeLinecap="round" strokeLinejoin="round" />
            </svg>
          </span>
          <div className="pt-1">
            <h2 className="text-[41px] leading-[52px] font-bold">Ready to record</h2>
            <p className="text-[32px] leading-[52px] text-[#67608c]">Records drives automatically in the background</p>
          </div>
        </section>

        <div className="-mr-12 mt-[39px] flex gap-[22px] overflow-hidden">
          <Chip>
            <Star className="size-9" />
            お気に入り
          </Chip>
          <Chip>
            <svg viewBox="0 0 36 28" className="ml-1 h-[28px] w-9" aria-hidden="true">
              <path fillRule="evenodd" fill="currentColor" d="M5 0 H31 Q36 0 36 5 V23 Q36 28 31 28 H5 Q0 28 0 23 V5 Q0 0 5 0 Z M11 7 A4 4 0 1 0 11.010 7 Z M3 23 Q4 25.500 6 25.500 H31 Q33 25 33.500 23 L25 14 Q24 13 23 14 L16 20.500 L12.500 17.500 Q11.500 17 10.500 17.800 Z" />
            </svg>
            写真あり
          </Chip>
          <Chip>今週</Chip>
          <Chip>今月</Chip>
          <Chip>
            <svg viewBox="0 0 42 26" className="ml-1 h-[26px] w-[42px]" fill="none" stroke="currentColor" strokeLinecap="round" aria-hidden="true">
              <path d="M12 2 L2 24 M30 2 L40 24" strokeWidth="3.500" />
              <path d="M21 1 V5 M21 11 V16 M21 21 V25" strokeWidth="2.500" />
            </svg>
            <span className="text-[35px]">100km+</span>
          </Chip>
        </div>

        <article className="mt-[51px] overflow-hidden rounded-[48px] border-2 border-[#ddd5f6] bg-[#fefeff] pb-24 shadow-[0_8px_40px_rgba(60,50,120,0.08)]">
          <div className="flex h-[165px] items-center pr-[43px] pl-10">
            <div className="pt-1 text-[#6b32e5]">
              <p className="text-[55px] leading-[52px] font-bold">6/10</p>
              <p className="mt-3 text-[27px] leading-8 font-semibold text-[#9b72ef]">水</p>
            </div>
            <i className="ml-8 h-[84px] w-[2px] bg-[#e9e5f6]" />
            <div className="ml-[29px] flex-1 pt-1">
              <p className="text-[41px] leading-[46px] font-medium">08:10 → 09:18</p>
              <p className="text-[30px] leading-[46px] text-[#67608c]">1h8m</p>
            </div>
            <svg viewBox="0 0 48 48" className="size-12" fill="#ff9029" stroke="#ff9029" strokeLinecap="round" strokeWidth="4" aria-label="Sunny">
              <circle cx="24" cy="24" r="10" strokeWidth="2" />
              <path d="M24 2.500 V7 M24 41 V45.500 M2.500 24 H7 M41 24 H45.500 M9 9 L12 12 M36 36 L39 39 M9 39 L12 36 M36 12 L39 9" />
            </svg>
            <span className="ml-[33px] flex h-[52px] items-center rounded-full bg-[#eeedf4] px-6 text-[34px] leading-none font-semibold text-[#67608c]">19°C</span>
            <button type="button" aria-label="Favorite" className="ml-[33px] text-[#ff9029]">
              <Star className="size-[54px]" />
            </button>
            <button type="button" aria-label="Delete" className="ml-[38px] text-[#8079a3]">
              <svg viewBox="0 0 40 48" className="h-12 w-10" fill="none" stroke="currentColor" strokeWidth="3.500" strokeLinecap="round" strokeLinejoin="round" aria-hidden="true">
                <path d="M2 10.500 H38 M13 10 V5.500 Q13 2 16.500 2 H23.500 Q27 2 27 5.500 V10 M5.500 11 L7.500 42 Q7.800 46 11.500 46 H28.500 Q32.200 46 32.500 42 L34.500 11" />
                <path d="M14 18 L14.500 38 M20 18 V38 M26 18 L25.500 38" strokeWidth="2.500" />
              </svg>
            </button>
          </div>

          <RouteMap />

          <div className="px-10 pt-[37px]">
            <h2 className="text-[47px] leading-[60px] font-bold">関越道ドライブ 練馬 → 熊谷</h2>
            <div className="mt-[34px] flex h-9 items-center text-[33px] leading-none text-[#3c3d4a]">
              <i className="size-9 rounded-full border-[9px] border-[#c8e8d8] bg-[#22ae60]" />
              <span className="ml-4">練馬区春日町</span>
              <span className="mx-[26px] flex gap-[5px]">
                <i className="size-[7px] rounded-full bg-[#d3cfe0]" />
                <i className="size-[7px] rounded-full bg-[#d3cfe0]" />
                <i className="size-[7px] rounded-full bg-[#d3cfe0]" />
                <i className="size-[7px] rounded-full bg-[#d3cfe0]" />
              </span>
              <span>熊谷市内</span>
              <i className="ml-4 size-9 rounded-full border-[9px] border-[#ffcccf] bg-[#ff3b3f]" />
            </div>
            <hr className="mt-[39px] border-t-2 border-[#ebe6fb]" />
            <div className="mt-[34px] flex justify-between">
              <Metric value="79.2" unit="km" label="距離" />
              <Metric value="68" unit="min" label="時間" divided />
              <Metric value="15" unit="%" label="消費" divided />
              <Metric value="105" unit="km/h" label="最高" divided />
            </div>
            <div className="mt-[39px] flex gap-[18px] text-[32px] leading-none font-semibold text-[#67608c]">
              <span className="flex h-16 items-center gap-3 rounded-full bg-[#ebe5fb] px-[27px] text-[#6b32e5]">
                <svg viewBox="0 0 26 26" className="size-[26px]" fill="currentColor" aria-hidden="true">
                  <path d="M0 2.500 C5 -1 9 0 13 1.500 C17 3 20 2.500 24 1.800 Q26 1.500 26 3.500 V17 Q26 18.500 24.500 19 C20 20.500 17 19.500 13 18.300 C9 17.200 6 17.300 3 18.500 V24.500 Q3 26 1.500 26 Q0 26 0 24.500 Z" />
                </svg>
                所沢市 ほか1地点
              </span>
              <span className="flex h-16 items-center rounded-full bg-[#f2f1f6] px-6">#高速</span>
              <span className="flex h-16 items-center rounded-full bg-[#f2f1f6] px-6">#朝</span>
            </div>
            <p className="mt-8 text-[34px] leading-[50px] text-[#67608c]">熊谷まで高速でサクッと。渋滞なしで快適だった</p>
          </div>
        </article>
      </main>

      <nav className="relative shrink-0 border-t-[3px] border-[#ddd5f8] shadow-[0_-6px_36px_rgba(0,0,0,0.13)]">
        <div className="flex h-[300px] rounded-t-[48px] bg-[#fefefe] px-6 pt-[38px]">
          <Tab label="History" active>
            <svg viewBox="0 0 84 66" className="h-[66px] w-[84px]" fill="currentColor" aria-hidden="true">
              <path fillRule="evenodd" d="M23 1.200 Q42 -1 61 1.200 Q68 2 71 9 L76.500 24 Q83.500 31 83.500 38 V62 Q83.500 65.500 80 65.500 H73.500 Q70 65.500 70 62 V55 Q42 57 14 55 V62 Q14 65.500 10.500 65.500 H4 Q0.500 65.500 0.500 62 V38 Q0.500 31 7.500 24 L13 9 Q16 2 23 1.200 Z M23.500 7.800 Q20.500 8 19 11 L15.800 20.500 Q15.500 22 17 22 Q42 20 67 22 Q68.500 22 68.200 20.500 L65 11 Q63.500 8 60.500 7.800 Q42 6.500 23.500 7.800 Z M17 34 A6.200 6.200 0 1 0 17.010 34 Z M67 34 A6.200 6.200 0 1 0 67.010 34 Z M33 35.800 H51 A4.300 4.300 0 0 1 51 44.500 H33 A4.300 4.300 0 0 1 33 35.800 Z" />
            </svg>
          </Tab>
          <Tab label="Statistics">
            <svg viewBox="0 0 82 62" className="h-[62px] w-[82px]" fill="currentColor" aria-hidden="true">
              <rect x="0" y="19" width="24" height="43" rx="6" />
              <rect x="29" y="10" width="24" height="52" rx="6" />
              <rect x="58" y="0" width="24" height="62" rx="6" />
            </svg>
          </Tab>
          <Tab label="走破" cjk>
            <svg viewBox="0 0 66 66" className="size-[66px]" aria-hidden="true">
              <circle cx="33" cy="33" r="33" fill="currentColor" />
              <path fill="#fefefe" d="M46 9 C52 11 62 22 61.500 38 C61 42 59.500 42 58.500 40 C55 40 55 37 49 37 C44 37 42 41 36 43 C34 46 33 53 35 56 C38 59 42 57 46 58 C44 60 39 61.500 34 61 C22 61 12 53 9 46 C11 42 12 38 15 37 C17 40 20 41 21 44 C23 47 28 46 28 43 C28 40 28 37 32 36 C36 34 36 30 33 26 C36 24 39 25 41 22 C45 20 49 18 50 14 C49 12 46 11 46 9 Z" />
              <path d="M47 26 L40 30 M33 40 L31 45 M20 48 L27 50" stroke="currentColor" strokeWidth="4" strokeLinecap="round" />
            </svg>
          </Tab>
          <Tab label="バッジ" cjk>
            <svg viewBox="0 0 64 71" className="h-[71px] w-16" fill="currentColor" aria-hidden="true">
              <path d="M18 0 H46 Q52 0 52 6 V26 Q52 34 45 38 L38 43 V57 H45 Q50 57 50 62 V68 Q50 71 47 71 H17 Q14 71 14 68 V62 Q14 57 19 57 H26 V43 L19 38 Q12 34 12 26 V6 Q12 0 18 0 Z" />
              <path d="M13 8 H6 Q2 8 2 12 C2 24 10 32 22 34.500 M51 8 H58 Q62 8 62 12 C62 24 54 32 42 34.500" fill="none" stroke="currentColor" strokeWidth="4.500" />
            </svg>
          </Tab>
          <Tab label="Settings">
            <svg viewBox="0 0 68 68" className="size-[68px]" aria-hidden="true">
              <circle cx="34" cy="34" r="18.500" fill="none" stroke="currentColor" strokeWidth="14" />
              {[0, 45, 90, 135, 180, 225, 270, 315].map((deg) => (
                <path key={deg} transform={`rotate(${deg} 34 34)`} d="M25 13 Q27.500 11 28 3 Q28.300 0.500 31 0.500 H37 Q39.700 0.500 40 3 Q40.500 11 43 13 Z" fill="currentColor" />
              ))}
            </svg>
          </Tab>
        </div>
      </nav>
    </div>
  );
}
